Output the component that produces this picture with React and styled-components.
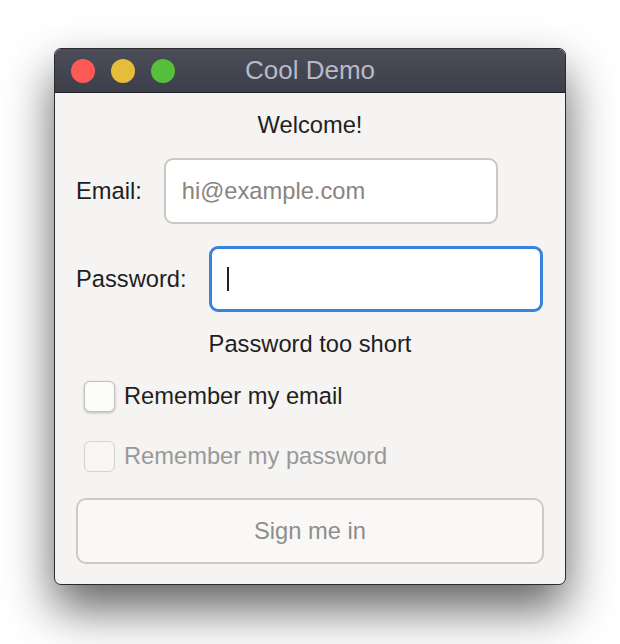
import React from 'react';
import styled, { createGlobalStyle } from 'styled-components';

const Global = createGlobalStyle`
  html, body {
    margin: 0;
    padding: 0;
    background: #ffffff;
    font-family: "Liberation Sans", Arial, sans-serif;
  }
`;

const Page = styled.div`
  width: 620px;
  height: 644px;
  padding: 48px 0 0 54px;
  box-sizing: border-box;
`;

const Window = styled.div`
  width: 512px;
  height: 537px;
  box-sizing: border-box;
  border: 1px solid #2b2b2e;
  border-radius: 7px;
  overflow: hidden;
  background: #f5f4f2;
  box-shadow: 0 24px 48px rgba(0, 0, 0, 0.62);
  display: flex;
  flex-direction: column;
`;

const TitleBar = styled.div`
  height: 43px;
  flex: none;
  display: flex;
  align-items: center;
  position: relative;
  padding-left: 16px;
  gap: 16px;
  background: linear-gradient(#4b4d58, #3c3e49);
  border-bottom: 1px solid #1e1f24;
`;

const Light = styled.span`
  width: 24px;
  height: 24px;
  border-radius: 50%;
  background: ${p => p.color};
`;

const Title = styled.div`
  position: absolute;
  left: 0;
  right: 0;
  text-align: center;
  color: #b7bac6;
  font-size: 26px;
  pointer-events: none;
`;

const Content = styled.div`
  flex: 1;
  padding: 20px 21px 0 21px;
  display: flex;
  flex-direction: column;
  font-size: 23.7px;
`;

const Line = styled.div`
  text-align: center;
  line-height: 24px;
  color: #1f1f1f;
  margin-top: ${p => p.top || 0}px;
`;

const FieldRow = styled.div`
  display: flex;
  align-items: center;
  gap: 22px;
  margin-top: ${p => p.top}px;
`;

const Label = styled.label`
  color: #1f1f1f;
`;

const Input = styled.div`
  width: 334px;
  height: 66px;
  box-sizing: border-box;
  background: #ffffff;
  border-radius: 9px;
  border: ${p => (p.focused ? '3px solid #3a83dd' : '2px solid #cdc7c1')};
  display: flex;
  align-items: center;
  padding-left: ${p => (p.focused ? 15 : 16)}px;
  color: #8a8480;
`;

const Caret = styled.span`
  width: 2px;
  height: 24px;
  background: #222;
`;

const CheckRow = styled.label`
  display: flex;
  align-items: center;
  gap: 9px;
  margin-top: ${p => p.top}px;
  padding-left: 8px;
  color: ${p => (p.disabled ? '#999999' : '#1f1f1f')};
`;

const Box = styled.span`
  width: 31px;
  height: 31px;
  box-sizing: border-box;
  border-radius: 6px;
  background: ${p => (p.disabled ? '#f7f6f4' : '#fbfbfa')};
  border: 1px solid ${p => (p.disabled ? '#d6d1cc' : '#c5c0bb')};
  box-shadow: ${p => (p.disabled ? 'none' : '0 1px 3px rgba(0,0,0,0.25)')};
`;

const Button = styled.button`
  margin-top: 26px;
  height: 66px;
  width: 100%;
  box-sizing: border-box;
  border: 2px solid #cfc9c3;
  border-radius: 10px;
  background: #f9f8f7;
  font-family: inherit;
  font-size: inherit;
  color: #8e8e8e;
`;

export default function App() {
  return (
    <>
      <Global />
      <Page>
        <Window>
          <TitleBar>
            <Light color="#fd5a55" />
            <Light color="#e6bd3a" />
            <Light color="#56c03a" />
            <Title>Cool Demo</Title>
          </TitleBar>
          <Content>
            <Line>Welcome!</Line>
            <FieldRow top={21}>
              <Label>Email:</Label>
              <Input>hi@example.com</Input>
            </FieldRow>
            <FieldRow top={22}>
              <Label>Password:</Label>
              <Input focused>
                <Caret />
              </Input>
            </FieldRow>
            <Line top={20}>Password too short</Line>
            <CheckRow top={25}>
              <Box />
              Remember my email
            </CheckRow>
            <CheckRow top={29} disabled>
              <Box disabled />
              Remember my password
            </CheckRow>
            <Button>Sign me in</Button>
          </Content>
        </Window>
      </Page>
    </>
  );
}
